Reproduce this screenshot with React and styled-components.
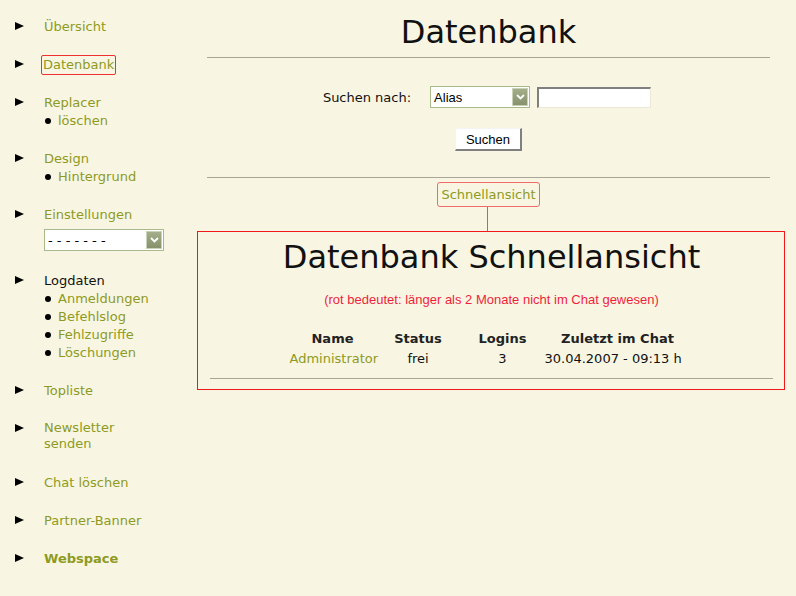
import React from "react";
import styled, { createGlobalStyle } from "styled-components";

const GlobalStyle = createGlobalStyle`
  html, body {
    margin: 0;
    padding: 0;
    background: #f8f6e2;
  }
  body {
    font-family: "DejaVu Sans", Verdana, sans-serif;
    font-size: 13px;
    color: #111;
  }
`;

const LINK = "#8e9a22";

const Page = styled.div`
  display: flex;
  width: 796px;
  min-height: 596px;
`;

const Sidebar = styled.nav`
  width: 197px;
  flex-shrink: 0;
  padding-top: 18px;
  box-sizing: border-box;
`;

const Group = styled.div`
  display: grid;
  grid-template-columns: 29px 1fr;
  padding-left: 15px;
  margin-bottom: 20px;
`;

const Arrow = styled.span`
  display: block;
  width: 0;
  height: 0;
  margin-top: 4px;
  border-left: 9px solid #000;
  border-top: 4.5px solid transparent;
  border-bottom: 4.5px solid transparent;
`;

const GroupBody = styled.div`
  display: flex;
  flex-direction: column;
  align-items: flex-start;
`;

const NavLink = styled.a`
  color: ${p => (p.$plain ? "#111" : LINK)};
  font-weight: ${p => (p.$bold ? "bold" : "normal")};
  line-height: ${p => (p.$tight ? "16px" : "18px")};
  padding-bottom: ${p => (p.$tight ? "2px" : "0")};
  text-decoration: none;
  cursor: pointer;
  ${p =>
    p.$active &&
    `
    border: 1px solid #f03030;
    border-radius: 2px;
    padding: 0 1px;
    margin: -1px 0 -1px -3px;
  `}
`;

const SubItem = styled.div`
  display: flex;
  align-items: center;
  line-height: 18px;
  margin-left: 1px;
`;

const Dot = styled.span`
  width: 6px;
  height: 6px;
  border-radius: 50%;
  background: #000;
  margin-right: 7px;
`;

const SelectBox = styled.div`
  display: flex;
  align-items: center;
  justify-content: space-between;
  width: ${p => p.$w}px;
  height: 22px;
  box-sizing: border-box;
  border: 1px solid #a8b98c;
  background: #fff;
  font-family: ${p => (p.$arial ? '"Liberation Sans", Arial, sans-serif' : '"DejaVu Sans", Verdana, sans-serif')};
  font-size: 13px;
  color: #000;
  padding-left: 3px;
  margin-top: ${p => p.$mt || 0}px;
  margin-bottom: ${p => p.$mb || 0}px;
`;

const SelectButton = styled.span`
  display: flex;
  align-items: center;
  justify-content: center;
  width: 16px;
  height: 18px;
  margin-right: 1px;
  background: linear-gradient(#a4ae8a, #87926c);
  border: 1px solid #c9d1b6;
  box-sizing: border-box;
`;

const Chevron = () => (
  <svg width="9" height="6" viewBox="0 0 9 6">
    <path d="M1 1 L4.5 4.5 L8 1" fill="none" stroke="#fff" strokeWidth="1.8" />
  </svg>
);

const Main = styled.main`
  width: 563px;
  padding: 0 15px 0 10px;
  display: flex;
  flex-direction: column;
  align-items: center;
`;

const Title = styled.h1`
  margin: 13px 0 0;
  font-family: "DejaVu Sans", sans-serif;
  font-weight: normal;
  font-size: 32px;
  line-height: 38px;
  color: #111;
`;

const Rule = styled.div`
  align-self: stretch;
  height: 1px;
  background: #aaa697;
  margin-top: ${p => p.$mt}px;
`;

const SearchRow = styled.div`
  display: flex;
  align-items: center;
  margin-top: 28px;
  margin-left: -3px;
`;

const Label = styled.span`
  margin-right: 19px;
`;

const TextInput = styled.div`
  width: 114px;
  height: 21px;
  box-sizing: border-box;
  margin-left: 7px;
  background: #fff;
  border-top: 2px solid #7f7f7f;
  border-left: 2px solid #7f7f7f;
  border-right: 1px solid #ece9d8;
  border-bottom: 1px solid #ece9d8;
`;

const Button = styled.button`
  margin-top: 20px;
  width: 67px;
  height: 23px;
  background: #fff;
  font-family: "Liberation Sans", Arial, sans-serif;
  font-size: 13px;
  color: #000;
  padding: 0;
  border-top: 1px solid #f4f4f4;
  border-left: 1px solid #f4f4f4;
  border-right: 2px solid #808080;
  border-bottom: 2px solid #808080;
`;

const Tab = styled.div`
  margin-top: 4px;
  border: 1px solid #f06a6a;
  border-radius: 3px;
  padding: 0 3px;
  height: 25px;
  box-sizing: border-box;
  line-height: 23px;
  color: ${LINK};
`;

const Connector = styled.div`
  width: 1px;
  height: 24px;
  background: #f05050;
  margin-left: -3px;
`;

const Panel = styled.section`
  align-self: stretch;
  margin: 0 -15px 0 -10px;
  border: 1px solid #f01818;
  display: flex;
  flex-direction: column;
  align-items: center;
  padding: 6px 11px 10px 12px;
`;

const PanelTitle = styled(Title)`
  margin: 0;
`;

const Note = styled.p`
  margin: 16px 0 0;
  font-family: "Liberation Sans", Arial, sans-serif;
  font-size: 13px;
  color: #f01e3c;
`;

const Table = styled.div`
  display: grid;
  grid-template-columns: 86px 85px 84px 146px;
  margin-top: 22px;
  margin-left: -3px;
  text-align: center;
  line-height: 20px;
  white-space: nowrap;
`;

const Th = styled.div`
  font-weight: bold;
  color: #222;
`;

const Td = styled.div`
  color: ${p => (p.$link ? LINK : "#111")};
  padding-right: ${p => p.$pr || 0}px;
`;

const PanelRule = styled(Rule)`
  margin-top: 9px;
`;

const nav = [
  { label: "Übersicht" },
  { label: "Datenbank", active: true },
  { label: "Replacer", subs: ["löschen"] },
  { label: "Design", subs: ["Hintergrund"] },
  { label: "Einstellungen", select: true },
  { label: "Logdaten", plain: true, subs: ["Anmeldungen", "Befehlslog", "Fehlzugriffe", "Löschungen"] },
  { label: "Topliste" },
  { label: "Newsletter", second: "senden" },
  { label: "Chat löschen" },
  { label: "Partner-Banner" },
  { label: "Webspace", bold: true },
];

export default function App() {
  return (
    <>
      <GlobalStyle />
      <Page>
        <Sidebar>
          {nav.map(item => (
            <Group key={item.label}>
              <Arrow />
              <GroupBody>
                {item.second ? (
                  <NavLink $tight>
                    {item.label}
                    <br />
                    {item.second}
                  </NavLink>
                ) : (
                  <NavLink $active={item.active} $plain={item.plain} $bold={item.bold}>
                    {item.label}
                  </NavLink>
                )}
                {item.select && (
                  <SelectBox $w={120} $mt={5} $mb={1}>
                    <span>- - - - - - -</span>
                    <SelectButton>
                      <Chevron />
                    </SelectButton>
                  </SelectBox>
                )}
                {item.subs &&
                  item.subs.map(s => (
                    <SubItem key={s}>
                      <Dot />
                      <NavLink>{s}</NavLink>
                    </SubItem>
                  ))}
              </GroupBody>
            </Group>
          ))}
        </Sidebar>
        <Main>
          <Title>Datenbank</Title>
          <Rule $mt={6} />
          <SearchRow>
            <Label>Suchen nach:</Label>
            <SelectBox $w={100} $arial>
              <span>Alias</span>
              <SelectButton>
                <Chevron />
              </SelectButton>
            </SelectBox>
            <TextInput />
          </SearchRow>
          <Button>Suchen</Button>
          <Rule $mt={26} />
          <Tab>Schnellansicht</Tab>
          <Connector />
          <Panel>
            <PanelTitle>Datenbank Schnellansicht</PanelTitle>
            <Note>(rot bedeutet: länger als 2 Monate nicht im Chat gewesen)</Note>
            <Table>
              <Th>Name</Th>
              <Th>Status</Th>
              <Th>Logins</Th>
              <Th>Zuletzt im Chat</Th>
              <Td $link>Administrator</Td>
              <Td>frei</Td>
              <Td>3</Td>
              <Td $pr={16}>30.04.2007 - 09:13 h</Td>
            </Table>
            <PanelRule />
          </Panel>
        </Main>
      </Page>
    </>
  );
}
